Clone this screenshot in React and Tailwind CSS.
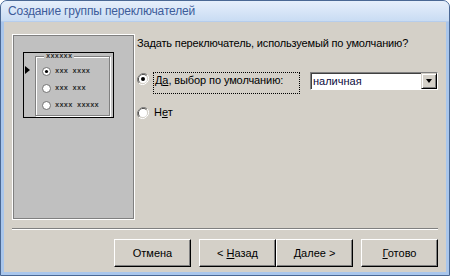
const font = { fontFamily: '"Liberation Sans", Arial, sans-serif' };

const Radio = ({ checked }) => (
    <svg width="12" height="12" viewBox="0 0 12 12" className="shrink-0">
        <path d="M10.2 1.8 A6 6 0 0 0 1.8 10.2" fill="none" stroke="#808080" strokeWidth="1" />
        <path d="M1.8 10.2 A6 6 0 0 0 10.2 1.8" fill="none" stroke="#ffffff" strokeWidth="1" />
        <path d="M9.5 2.5 A5 5 0 0 0 2.5 9.5" fill="none" stroke="#404040" strokeWidth="1" />
        <path d="M2.5 9.5 A5 5 0 0 0 9.5 2.5" fill="none" stroke="#d4d0c8" strokeWidth="1" />
        <circle cx="6" cy="6" r="4" fill="#ffffff" />
        {checked && <circle cx="6" cy="6" r="2" fill="#000000" />}
    </svg>
);

const MiniRadio = ({ checked, label }) => (
    <div className="flex items-center gap-[4px] h-[9px]">
        <svg width="9" height="9" viewBox="0 0 9 9" className="shrink-0">
            <circle cx="4.5" cy="4.5" r="4" fill="#ffffff" stroke="#707070" strokeWidth="1" />
            {checked && <circle cx="4.5" cy="4.5" r="1.6" fill="#000000" />}
        </svg>
        <span className="text-[7px] leading-[7px] font-bold tracking-[0.2px] text-[#2a2a2a]" style={{ fontFamily: '"Liberation Mono", monospace' }}>
            {label}
        </span>
    </div>
);

const Button = ({ children }) => (
    <button
        className="w-[77px] h-[28px] bg-[#d4d0c8] border-t border-l border-t-white border-l-white border-r border-b border-r-black border-b-black shadow-[inset_-1px_-1px_0_#808080] text-[11px] text-black"
        style={font}
    >
        {children}
    </button>
);

export default function App() {
    return (
        <div className="w-[450px] h-[276px] flex flex-col bg-[#a9c6ec] border border-[#4a6894] rounded-t-[7px] overflow-hidden" style={font}>
            <div className="h-[21px] shrink-0 flex items-center pl-[7px] bg-gradient-to-b from-[#e6effb] to-[#c9dcf3] border-b border-[#b6cdec]">
                <span className="text-[12px] tracking-[-0.15px] text-[#3d5c9a]">Создание группы переключателей</span>
            </div>
            <div className="flex-1 mx-[3px] mb-[3px] bg-[#d4d0c8] flex flex-col">
                <div className="flex pt-[12px] pl-[8px]">
                    <div className="w-[123px] h-[186px] shrink-0 bg-[#c0c0c0] border border-white shadow-[inset_1px_1px_0_#808080,inset_-1px_-1px_0_#808080] pl-[10px] pt-[17px]">
                        <div className="w-[91px] h-[66px] border border-black flex pt-[3px]">
                            <div className="w-[11px] flex items-start pt-[10px] pl-[1px]">
                                <div className="w-0 h-0 border-y-[4.5px] border-y-transparent border-l-[5px] border-l-black" />
                            </div>
                            <div className="relative w-[75px] h-[60px] border border-[#808080] shadow-[inset_1px_1px_0_#fff,1px_1px_0_#fff] flex flex-col gap-[8px] pl-[6px] pt-[10px]">
                                <span
                                    className="absolute left-[8px] top-[-4px] px-[2px] bg-[#c0c0c0] text-[7px] leading-[7px] font-bold tracking-[0.2px] text-[#2a2a2a]"
                                    style={{ fontFamily: '"Liberation Mono", monospace' }}
                                >
                                    xxxxxx
                                </span>
                                <MiniRadio checked label="xxx xxxx" />
                                <MiniRadio label="xxx xxx" />
                                <MiniRadio label="xxxx xxxxx" />
                            </div>
                        </div>
                    </div>
                    <div className="flex-1 pl-[2px] pt-[3px]">
                        <p className="text-[11px] leading-[13px] tracking-[-0.15px] text-black">Задать переключатель, используемый по умолчанию?</p>
                        <div className="flex items-start mt-[22px]">
                            <div className="pt-[1px]">
                                <Radio checked />
                            </div>
                            <div className="ml-[4px] w-[147px] h-[22px] border border-dotted border-black pl-[1px] pt-[1px] text-[11px] leading-[13px] tracking-[-0.1px] text-black">
                                Д<span className="underline">а</span>, выбор по умолчанию:
                            </div>
                            <div className="ml-[10px] w-[128px] h-[18px] flex bg-white border border-t-[#808080] border-l-[#808080] border-r-white border-b-white shadow-[inset_1px_1px_0_#404040]">
                                <span className="flex-1 pl-[2px] pt-[1px] text-[11px] leading-[14px] text-[#0c0c40]">наличная</span>
                                <div className="w-[16px] h-[16px] bg-[#d4d0c8] border-t border-l border-t-[#d4d0c8] border-l-[#d4d0c8] border-r border-b border-r-black border-b-black shadow-[inset_1px_1px_0_#fff,inset_-1px_-1px_0_#808080] flex items-center justify-center">
                                    <div className="w-0 h-0 border-x-[3.5px] border-x-transparent border-t-[4px] border-t-black" />
                                </div>
                            </div>
                        </div>
                        <div className="flex items-center mt-[12px] h-[13px]">
                            <Radio />
                            <span className="ml-[5px] text-[11px] leading-[13px] text-black">
                                Н<span className="underline">е</span>т
                            </span>
                        </div>
                    </div>
                </div>
                <div className="mx-[8px] mt-[8px] h-[2px] border-t border-t-[#808080] border-b border-b-white" />
                <div className="flex justify-end pr-[8px] mt-[9px]">
                    <Button>Отмена</Button>
                    <div className="ml-[8px] flex">
                        <Button>
                            &lt; <span className="underline">Н</span>азад
                        </Button>
                        <Button>
                            <span className="underline">Д</span>алее &gt;
                        </Button>
                    </div>
                    <div className="ml-[8px]">
                        <Button>
                            <span className="underline">Г</span>отово
                        </Button>
                    </div>
                </div>
            </div>
        </div>
    );
}
